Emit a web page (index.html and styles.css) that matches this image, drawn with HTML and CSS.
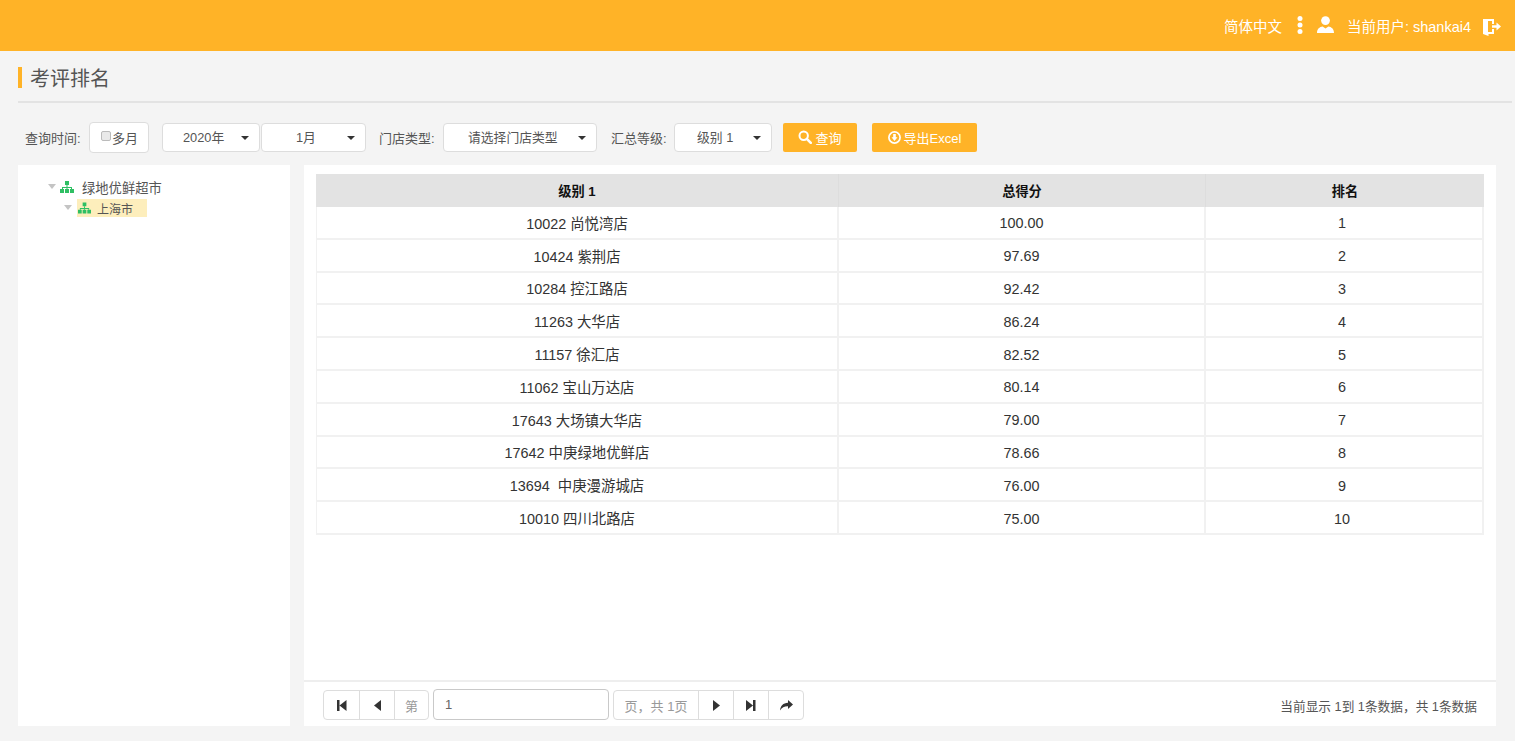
FILE: index.html
```html
<!DOCTYPE html>
<html lang="zh-CN">
<head>
    <meta charset="UTF-8">
    <meta name="viewport" content="width=device-width, initial-scale=1.0">
    <title>考评排名</title>
    <link rel="stylesheet" href="styles.css">
</head>
<body>
    <header class="topbar">
        <span class="lang">简体中文</span>
        <svg class="icon-more" width="6" height="18" viewBox="0 0 6 18"><circle cx="3" cy="2.500" r="2.500"/><circle cx="3" cy="9" r="2.500"/><circle cx="3" cy="15.500" r="2.500"/></svg>
        <svg class="icon-user" width="17" height="17" viewBox="0 0 17 17"><circle cx="8.500" cy="4.600" r="4.400"/><path d="M0 17c0-4 2.600-6 5.600-6.400l2.900 2 2.900-2c3 .4 5.600 2.400 5.600 6.400z"/></svg>
        <span class="user">当前用户: shankai4</span>
        <svg class="icon-logout" width="18" height="18" viewBox="0 0 18 18"><path d="M0 1h11v5H9V3H5l0 .3V14h4v-3h2v5H5.500v2L0 16z"/><path d="M9 7.300h4.500V4.500L18 8.500l-4.500 4V9.700H9z"/></svg>
    </header>

    <main class="page">
        <h1 class="page-title">考评排名</h1>

        <form class="filters">
            <span class="filter-label">查询时间:</span>
            <label class="multi-month"><span class="fake-check"></span>多月</label>
            <button type="button" class="select select-year">2020年<i class="caret"></i></button>
            <button type="button" class="select select-month">1月<i class="caret"></i></button>
            <span class="filter-label label-store">门店类型:</span>
            <button type="button" class="select select-store">请选择门店类型<i class="caret"></i></button>
            <span class="filter-label label-level">汇总等级:</span>
            <button type="button" class="select select-level">级别 1<i class="caret"></i></button>
            <button type="button" class="btn btn-search">
                <svg width="14" height="14" viewBox="0 0 14 14" fill="none" stroke="#fff"><circle cx="5.700" cy="5.700" r="4.200" stroke-width="2"/><path d="M8.800 8.800l4 4" stroke-width="2.600" stroke-linecap="round"/></svg>
                查询
            </button>
            <button type="button" class="btn btn-export">
                <svg width="13" height="13" viewBox="0 0 13 13"><circle cx="6.500" cy="6.500" r="5.600" fill="none" stroke="#fff" stroke-width="1.700"/><path d="M5.200 3h2.600v3.300h1.700L6.500 10 3.500 6.300h1.700z" fill="#fff"/></svg>
                导出Excel
            </button>
        </form>

        <div class="content">
            <aside class="tree">
                <div class="tree-node">
                    <i class="tree-arrow"></i>
                    <svg class="org" width="14" height="12" viewBox="0 0 14 12"><path d="M5 0h4v4H5zM0 8h4v4H0zM5 8h4v4H5zM10 8h4v4h-4z"/><path d="M6.500 4h1v2H12v2h-1V7H7.500v1h-1V7H3v1H2V6h4.500z"/></svg>
                    <span class="tree-text">绿地优鲜超市</span>
                </div>
                <div class="tree-node tree-child">
                    <i class="tree-arrow"></i>
                    <span class="tree-selected">
                        <svg class="org" width="14" height="12" viewBox="0 0 14 12"><path d="M5 0h4v4H5zM0 8h4v4H0zM5 8h4v4H5zM10 8h4v4h-4z"/><path d="M6.500 4h1v2H12v2h-1V7H7.500v1h-1V7H3v1H2V6h4.500z"/></svg>
                        <span class="tree-text">上海市</span>
                    </span>
                </div>
            </aside>

            <section class="result">
                <div class="table-wrap">
                    <table class="rank-table">
                        <colgroup>
                            <col class="col-name">
                            <col class="col-score">
                            <col>
                        </colgroup>
                        <thead>
                            <tr><th>级别 1</th><th>总得分</th><th>排名</th></tr>
                        </thead>
                        <tbody>
                            <tr><td>10022 尚悦湾店</td><td>100.00</td><td>1</td></tr>
                            <tr><td>10424 紫荆店</td><td>97.69</td><td>2</td></tr>
                            <tr><td>10284 控江路店</td><td>92.42</td><td>3</td></tr>
                            <tr><td>11263 大华店</td><td>86.24</td><td>4</td></tr>
                            <tr><td>11157 徐汇店</td><td>82.52</td><td>5</td></tr>
                            <tr><td>11062 宝山万达店</td><td>80.14</td><td>6</td></tr>
                            <tr><td>17643 大场镇大华店</td><td>79.00</td><td>7</td></tr>
                            <tr><td>17642 中庚绿地优鲜店</td><td>78.66</td><td>8</td></tr>
                            <tr><td>13694&nbsp; 中庚漫游城店</td><td>76.00</td><td>9</td></tr>
                            <tr><td>10010 四川北路店</td><td>75.00</td><td>10</td></tr>
                        </tbody>
                    </table>
                </div>

                <footer class="pager-bar">
                    <div class="pager">
                        <div class="pager-group">
                            <button type="button" class="pg-btn"><svg width="10" height="11" viewBox="0 0 10 11"><path d="M0 0h2.500v11H0zM9.500 0v11L2.500 5.500z"/></svg></button>
                            <button type="button" class="pg-btn"><svg width="7" height="11" viewBox="0 0 7 11"><path d="M7 0v11L0 5.500z"/></svg></button>
                            <span class="pg-text pg-di">第</span>
                        </div>
                        <input class="pg-input" type="text" value="1">
                        <div class="pager-group">
                            <span class="pg-text pg-total">页，共 1页</span>
                            <button type="button" class="pg-btn"><svg width="7" height="11" viewBox="0 0 7 11"><path d="M0 0v11l7-5.500z"/></svg></button>
                            <button type="button" class="pg-btn"><svg width="10" height="11" viewBox="0 0 10 11"><path d="M0 0v11l7-5.500zM7 0h2.500v11H7z"/></svg></button>
                            <button type="button" class="pg-btn"><svg width="13" height="11" viewBox="0 0 13 11"><path d="M8 0l5 4.500L8 9V6.300C4.500 6.200 2 7.300 0 10.500 .5 6 3 3 8 2.800z"/></svg></button>
                        </div>
                    </div>
                    <span class="pager-info">当前显示 1到 1条数据，共 1条数据</span>
                </footer>
            </section>
        </div>
    </main>
</body>
</html>
```

FILE: styles.css
```css
* {
    box-sizing: border-box;
}
html, body {
    height: 100%;
}
body {
    margin: 0;
    overflow: hidden;
    display: flex;
    flex-direction: column;
    font-family: "Liberation Sans", "Noto Sans CJK SC", sans-serif;
    font-size: 13px;
    color: #555;
    background-color: #f4f4f4;
}

/* top bar */
.topbar {
    height: 51px;
    flex: none;
    display: flex;
    align-items: center;
    justify-content: flex-end;
    padding: 0 14px 0 0;
    background: #ffb327;
    color: #fff;
}
.topbar svg {
    fill: #fff;
}
.lang {
    font-size: 14.500px;
}
.icon-more {
    margin: -1px 0 0 15px;
}
.icon-user {
    margin: -2px 0 0 14px;
}
.user {
    font-size: 14.500px;
    margin-left: 13px;
}
.icon-logout {
    margin: 2px 0 0 12px;
}

/* page */
.page {
    flex: 1;
    min-height: 0;
    display: flex;
    flex-direction: column;
    padding: 0 19px 15px 18px;
}
.page-title {
    height: 52px;
    flex: none;
    margin: 0 -16px 19px 0;
    padding: 2px 0 0;
    display: flex;
    align-items: center;
    border-bottom: 2px solid #e3e3e3;
    font-size: 20px;
    font-weight: normal;
    color: #555;
}
.page-title::before {
    content: "";
    width: 4px;
    height: 21px;
    margin-right: 8px;
    background: #ffb327;
}

/* filters */
.filters {
    height: 31px;
    flex: none;
    margin-bottom: 12px;
    padding-left: 7px;
    display: flex;
    align-items: center;
}
.filter-label {
    width: 64px;
    white-space: nowrap;
}
.label-store {
    margin-left: 13px;
}
.label-level {
    margin-left: 14px;
    width: 63px;
}
.multi-month {
    width: 60px;
    height: 31px;
    display: flex;
    align-items: center;
    padding-left: 11px;
    background: #fff;
    border: 1px solid #ddd;
    border-radius: 4px;
    font-size: 13px;
}
.fake-check {
    width: 10px;
    height: 10px;
    margin: -3px 1px 0 0;
    background: #e9e9e9;
    border: 1px solid #bbb;
    border-radius: 2px;
}
.select {
    position: relative;
    height: 29px;
    padding: 0 0 2px;
    background: #fff;
    border: 1px solid #ddd;
    border-radius: 4px;
    font: inherit;
    font-size: 12.800px;
    color: #555;
    text-align: left;
}
.caret {
    position: absolute;
    right: 10px;
    top: 12px;
    border-top: 4px solid #333;
    border-left: 4px solid transparent;
    border-right: 4px solid transparent;
}
.select-year {
    width: 98px;
    margin-left: 13px;
    padding-left: 20px;
}
.select-month {
    width: 105px;
    margin-left: 1px;
    padding-left: 34px;
}
.select-store {
    width: 154px;
    padding-left: 24px;
}
.select-level {
    width: 98px;
    padding-left: 22px;
}
.btn {
    height: 29px;
    display: flex;
    align-items: center;
    justify-content: center;
    gap: 3px;
    padding: 0 0 1px;
    background: #ffb327;
    border: 0;
    border-radius: 2px;
    font: inherit;
    color: #fff;
}
.btn-search {
    width: 74px;
    margin-left: 11px;
}
.btn-export {
    width: 105px;
    margin-left: 15px;
}

/* main area */
.content {
    flex: 1;
    min-height: 0;
    display: flex;
    gap: 14px;
}
.tree {
    width: 272px;
    flex: none;
    padding: 12px 0 0 30px;
    background: #fff;
}
.tree-node {
    height: 20px;
    display: flex;
    align-items: center;
}
.tree-child {
    margin-top: 1px;
    padding-left: 16px;
}
.tree-arrow {
    width: 0;
    height: 0;
    margin: -1px 4px 0 0;
    border-top: 5px solid #c4c4c4;
    border-left: 4.500px solid transparent;
    border-right: 4.500px solid transparent;
}
.org {
    fill: #2fbf63;
    flex: none;
}
.tree-text {
    margin-left: 8px;
    font-size: 13.300px;
    color: #555;
}
.tree-selected {
    width: 70px;
    height: 18px;
    margin-left: 1px;
    display: flex;
    align-items: center;
    background: #fdeebc;
}
.tree-selected .org {
    margin-left: 1px;
    width: 13px;
}
.tree-selected .tree-text {
    margin-left: 6px;
    font-size: 12px;
}
.result {
    flex: 1;
    min-width: 0;
    display: flex;
    flex-direction: column;
    background: #fff;
}
.table-wrap {
    flex: 1;
    min-height: 0;
    padding: 9px 12px 0;
}
.rank-table {
    width: 100%;
    table-layout: fixed;
    border-collapse: separate;
    border-spacing: 0;
    font-size: 14.400px;
    color: #333;
    text-align: center;
}
.col-name {
    width: 523px;
}
.col-score {
    width: 367px;
}
.rank-table th {
    height: 33px;
    padding: 0;
    background: #e3e3e3;
    border-right: 1px solid #ddd;
    font-size: 13.200px;
    color: #111;
}
.rank-table th:last-child {
    border-right: 0;
}
.rank-table td {
    height: 32.800px;
    padding: 2px 0 0;
    border-right: 2px solid #f1f1f1;
    border-bottom: 2px solid #f1f1f1;
}
.rank-table td:first-child {
    padding-top: 0;
    border-left: 1px solid #f1f1f1;
}
.rank-table td:last-child {
    padding-right: 4px;
}

/* pager */
.pager-bar {
    height: 46px;
    flex: none;
    display: flex;
    align-items: center;
    justify-content: space-between;
    padding: 2px 19px 0;
    border-top: 2px solid #eee;
}
.pager {
    display: flex;
    gap: 4px;
}
.pager-group {
    height: 30px;
    display: flex;
    background: #fff;
    border: 1px solid #ddd;
    border-radius: 4px;
}
.pg-btn {
    width: 35px;
    padding: 0;
    display: flex;
    align-items: center;
    justify-content: center;
    background: none;
    border: 0;
    border-left: 1px solid #ddd;
}
.pg-btn:first-child {
    border-left: 0;
}
.pg-btn svg {
    fill: #333;
}
.pg-text {
    display: flex;
    align-items: center;
    justify-content: center;
    color: #999;
}
.pg-di {
    width: 34px;
    border-left: 1px solid #ddd;
}
.pg-total {
    width: 84px;
}
.pg-input {
    width: 176px;
    height: 31px;
    margin-top: -1px;
    padding: 0 11px;
    border: 1px solid #c9c9c9;
    border-radius: 4px;
    font: inherit;
    color: #666;
    outline: none;
}
.pager-info {
    font-size: 12.700px;
    color: #555;
}
```
